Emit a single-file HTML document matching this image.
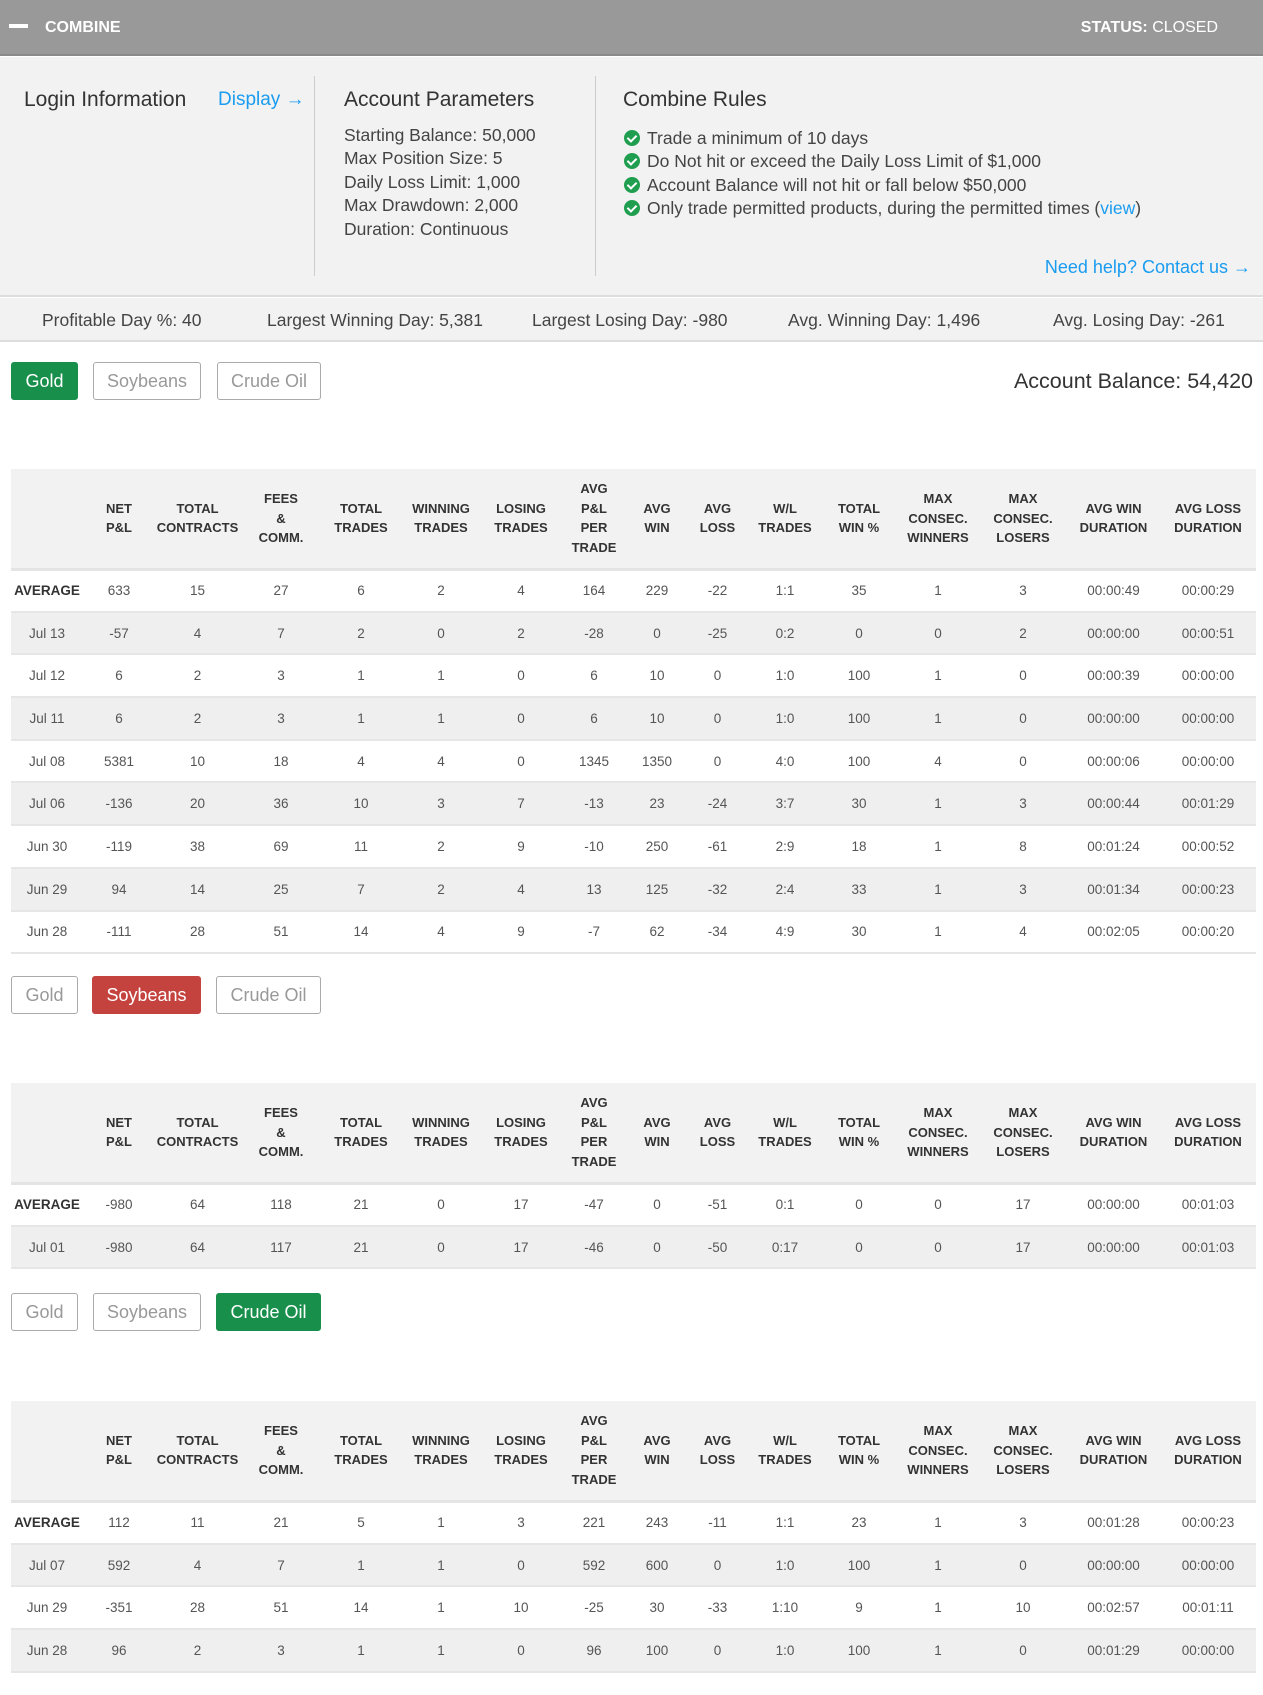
<!DOCTYPE html>
<html><head><meta charset="utf-8"><style>
*{box-sizing:border-box;margin:0;padding:0}
body{width:1263px;height:1695px;position:relative;background:#fff;font-family:"Liberation Sans",Arial,sans-serif;color:#333;overflow:hidden}
.abs{position:absolute}
.hdr{left:0;top:0;width:1263px;height:56px;background:#999;border-bottom:2px solid #8a8a8a}
.hdr .t{position:absolute;top:19px;color:#fff;font-weight:bold;font-size:16px}
.info{left:0;top:57px;width:1263px;height:240px;background:#f2f2f2;border-bottom:2px solid #ddd}
.vd{position:absolute;top:19px;height:200px;width:1px;background:#ccc}
.h2{position:absolute;font-size:21px;color:#333}
.pl{position:absolute;font-size:17.5px;line-height:23.4px;color:#444}
.blue{color:#1a9cf0}
.chk{display:inline-block;width:16px;height:16px;border-radius:50%;background:#1e9e4e;vertical-align:-2px;margin-right:7px;position:relative}
.chk:after{content:"";position:absolute;left:5px;top:3px;width:4px;height:7px;border:solid #fff;border-width:0 2px 2px 0;transform:rotate(45deg)}
.stats{left:0;top:298px;width:1263px;height:44px;background:#f2f2f2;border-bottom:2px solid #ddd;font-size:17.5px;color:#444}
.stats span{position:absolute;top:12px}
.btn{position:absolute;height:38px;border:1px solid #aaa;border-radius:3px;font-size:18px;color:#999;text-align:center;line-height:36px;background:#fff}
.btn.g{background:#188f4a;border-color:#188f4a;color:#fff}
.btn.r{background:#c4433f;border-color:#c4433f;color:#fff}
table{position:absolute;left:11px;width:1245px;border-collapse:collapse;table-layout:fixed}
th{background:#f2f2f2;font-size:13px;font-weight:bold;color:#333;line-height:19.5px;height:100px;text-align:center;border-bottom:3px solid #e4e4e4}
td{font-size:13.5px;color:#555;text-align:center;height:42.7px;border-bottom:2px solid #e6e6e6}
tr.a td{background:#fff}
tr.a td:first-child{font-weight:bold;color:#333}
tbody tr:nth-child(even) td{background:#efefef}
</style></head><body>
<div class="abs hdr">
<div style="position:absolute;left:9px;top:24px;width:19px;height:4px;background:#fff"></div>
<div class="t" style="left:45px">COMBINE</div>
<div class="t" style="right:45px">STATUS: <span style="font-weight:normal">CLOSED</span></div>
</div>
<div class="abs info">
<div class="h2" style="left:24px;top:31px">Login Information</div>
<div class="h2 blue" style="left:218px;top:32px;font-size:19px">Display →</div>
<div class="vd" style="left:314px"></div>
<div class="h2" style="left:344px;top:31px">Account Parameters</div>
<div class="pl" style="left:344px;top:67px">Starting Balance: 50,000<br>Max Position Size: 5<br>Daily Loss Limit: 1,000<br>Max Drawdown: 2,000<br>Duration: Continuous</div>
<div class="vd" style="left:595px"></div>
<div class="h2" style="left:623px;top:31px">Combine Rules</div>
<div class="pl" style="left:624px;top:70px"><span class="chk"></span>Trade a minimum of 10 days<br><span class="chk"></span>Do Not hit or exceed the Daily Loss Limit of $1,000<br><span class="chk"></span>Account Balance will not hit or fall below $50,000<br><span class="chk"></span>Only trade permitted products, during the permitted times (<span class="blue">view</span>)</div>
<div class="pl blue" style="right:12px;top:199px;font-size:18px">Need help? Contact us →</div>
</div>
<div class="abs stats">
<span style="left:42px">Profitable Day %: 40</span>
<span style="left:267px">Largest Winning Day: 5,381</span>
<span style="left:532px">Largest Losing Day: -980</span>
<span style="left:788px">Avg. Winning Day: 1,496</span>
<span style="left:1053px">Avg. Losing Day: -261</span>
</div>

<div class="btn g" style="left:11px;top:362px;width:67px">Gold</div>
<div class="btn" style="left:93px;top:362px;width:108px">Soybeans</div>
<div class="btn" style="left:217px;top:362px;width:104px">Crude Oil</div>
<div class="abs" style="right:10px;top:369px;font-size:21.5px;color:#333">Account Balance: 54,420</div>

<table style="top:469px">
<colgroup><col style="width:72px"><col style="width:72px"><col style="width:85px"><col style="width:82px"><col style="width:78px"><col style="width:82px"><col style="width:78px"><col style="width:68px"><col style="width:58px"><col style="width:63px"><col style="width:72px"><col style="width:76px"><col style="width:82px"><col style="width:88px"><col style="width:93px"><col style="width:96px"></colgroup>
<thead><tr><th></th><th>NET<br>P&amp;L</th><th>TOTAL<br>CONTRACTS</th><th>FEES<br>&amp;<br>COMM.</th><th>TOTAL<br>TRADES</th><th>WINNING<br>TRADES</th><th>LOSING<br>TRADES</th><th>AVG<br>P&amp;L<br>PER<br>TRADE</th><th>AVG<br>WIN</th><th>AVG<br>LOSS</th><th>W/L<br>TRADES</th><th>TOTAL<br>WIN %</th><th>MAX<br>CONSEC.<br>WINNERS</th><th>MAX<br>CONSEC.<br>LOSERS</th><th>AVG WIN<br>DURATION</th><th>AVG LOSS<br>DURATION</th></tr></thead>
<tbody>
<tr class="a"><td>AVERAGE</td><td>633</td><td>15</td><td>27</td><td>6</td><td>2</td><td>4</td><td>164</td><td>229</td><td>-22</td><td>1:1</td><td>35</td><td>1</td><td>3</td><td>00:00:49</td><td>00:00:29</td></tr>
<tr><td>Jul 13</td><td>-57</td><td>4</td><td>7</td><td>2</td><td>0</td><td>2</td><td>-28</td><td>0</td><td>-25</td><td>0:2</td><td>0</td><td>0</td><td>2</td><td>00:00:00</td><td>00:00:51</td></tr>
<tr><td>Jul 12</td><td>6</td><td>2</td><td>3</td><td>1</td><td>1</td><td>0</td><td>6</td><td>10</td><td>0</td><td>1:0</td><td>100</td><td>1</td><td>0</td><td>00:00:39</td><td>00:00:00</td></tr>
<tr><td>Jul 11</td><td>6</td><td>2</td><td>3</td><td>1</td><td>1</td><td>0</td><td>6</td><td>10</td><td>0</td><td>1:0</td><td>100</td><td>1</td><td>0</td><td>00:00:00</td><td>00:00:00</td></tr>
<tr><td>Jul 08</td><td>5381</td><td>10</td><td>18</td><td>4</td><td>4</td><td>0</td><td>1345</td><td>1350</td><td>0</td><td>4:0</td><td>100</td><td>4</td><td>0</td><td>00:00:06</td><td>00:00:00</td></tr>
<tr><td>Jul 06</td><td>-136</td><td>20</td><td>36</td><td>10</td><td>3</td><td>7</td><td>-13</td><td>23</td><td>-24</td><td>3:7</td><td>30</td><td>1</td><td>3</td><td>00:00:44</td><td>00:01:29</td></tr>
<tr><td>Jun 30</td><td>-119</td><td>38</td><td>69</td><td>11</td><td>2</td><td>9</td><td>-10</td><td>250</td><td>-61</td><td>2:9</td><td>18</td><td>1</td><td>8</td><td>00:01:24</td><td>00:00:52</td></tr>
<tr><td>Jun 29</td><td>94</td><td>14</td><td>25</td><td>7</td><td>2</td><td>4</td><td>13</td><td>125</td><td>-32</td><td>2:4</td><td>33</td><td>1</td><td>3</td><td>00:01:34</td><td>00:00:23</td></tr>
<tr><td>Jun 28</td><td>-111</td><td>28</td><td>51</td><td>14</td><td>4</td><td>9</td><td>-7</td><td>62</td><td>-34</td><td>4:9</td><td>30</td><td>1</td><td>4</td><td>00:02:05</td><td>00:00:20</td></tr>
</tbody></table>

<div class="btn" style="left:11px;top:976px;width:67px">Gold</div>
<div class="btn r" style="left:92px;top:976px;width:109px">Soybeans</div>
<div class="btn" style="left:216px;top:976px;width:105px">Crude Oil</div>

<table style="top:1083px">
<colgroup><col style="width:72px"><col style="width:72px"><col style="width:85px"><col style="width:82px"><col style="width:78px"><col style="width:82px"><col style="width:78px"><col style="width:68px"><col style="width:58px"><col style="width:63px"><col style="width:72px"><col style="width:76px"><col style="width:82px"><col style="width:88px"><col style="width:93px"><col style="width:96px"></colgroup>
<thead><tr><th></th><th>NET<br>P&amp;L</th><th>TOTAL<br>CONTRACTS</th><th>FEES<br>&amp;<br>COMM.</th><th>TOTAL<br>TRADES</th><th>WINNING<br>TRADES</th><th>LOSING<br>TRADES</th><th>AVG<br>P&amp;L<br>PER<br>TRADE</th><th>AVG<br>WIN</th><th>AVG<br>LOSS</th><th>W/L<br>TRADES</th><th>TOTAL<br>WIN %</th><th>MAX<br>CONSEC.<br>WINNERS</th><th>MAX<br>CONSEC.<br>LOSERS</th><th>AVG WIN<br>DURATION</th><th>AVG LOSS<br>DURATION</th></tr></thead>
<tbody>
<tr class="a"><td>AVERAGE</td><td>-980</td><td>64</td><td>118</td><td>21</td><td>0</td><td>17</td><td>-47</td><td>0</td><td>-51</td><td>0:1</td><td>0</td><td>0</td><td>17</td><td>00:00:00</td><td>00:01:03</td></tr>
<tr><td>Jul 01</td><td>-980</td><td>64</td><td>117</td><td>21</td><td>0</td><td>17</td><td>-46</td><td>0</td><td>-50</td><td>0:17</td><td>0</td><td>0</td><td>17</td><td>00:00:00</td><td>00:01:03</td></tr>
</tbody></table>

<div class="btn" style="left:11px;top:1293px;width:67px">Gold</div>
<div class="btn" style="left:93px;top:1293px;width:108px">Soybeans</div>
<div class="btn g" style="left:216px;top:1293px;width:105px">Crude Oil</div>

<table style="top:1401px">
<colgroup><col style="width:72px"><col style="width:72px"><col style="width:85px"><col style="width:82px"><col style="width:78px"><col style="width:82px"><col style="width:78px"><col style="width:68px"><col style="width:58px"><col style="width:63px"><col style="width:72px"><col style="width:76px"><col style="width:82px"><col style="width:88px"><col style="width:93px"><col style="width:96px"></colgroup>
<thead><tr><th></th><th>NET<br>P&amp;L</th><th>TOTAL<br>CONTRACTS</th><th>FEES<br>&amp;<br>COMM.</th><th>TOTAL<br>TRADES</th><th>WINNING<br>TRADES</th><th>LOSING<br>TRADES</th><th>AVG<br>P&amp;L<br>PER<br>TRADE</th><th>AVG<br>WIN</th><th>AVG<br>LOSS</th><th>W/L<br>TRADES</th><th>TOTAL<br>WIN %</th><th>MAX<br>CONSEC.<br>WINNERS</th><th>MAX<br>CONSEC.<br>LOSERS</th><th>AVG WIN<br>DURATION</th><th>AVG LOSS<br>DURATION</th></tr></thead>
<tbody>
<tr class="a"><td>AVERAGE</td><td>112</td><td>11</td><td>21</td><td>5</td><td>1</td><td>3</td><td>221</td><td>243</td><td>-11</td><td>1:1</td><td>23</td><td>1</td><td>3</td><td>00:01:28</td><td>00:00:23</td></tr>
<tr><td>Jul 07</td><td>592</td><td>4</td><td>7</td><td>1</td><td>1</td><td>0</td><td>592</td><td>600</td><td>0</td><td>1:0</td><td>100</td><td>1</td><td>0</td><td>00:00:00</td><td>00:00:00</td></tr>
<tr><td>Jun 29</td><td>-351</td><td>28</td><td>51</td><td>14</td><td>1</td><td>10</td><td>-25</td><td>30</td><td>-33</td><td>1:10</td><td>9</td><td>1</td><td>10</td><td>00:02:57</td><td>00:01:11</td></tr>
<tr><td>Jun 28</td><td>96</td><td>2</td><td>3</td><td>1</td><td>1</td><td>0</td><td>96</td><td>100</td><td>0</td><td>1:0</td><td>100</td><td>1</td><td>0</td><td>00:01:29</td><td>00:00:00</td></tr>
</tbody></table>
</body></html>
